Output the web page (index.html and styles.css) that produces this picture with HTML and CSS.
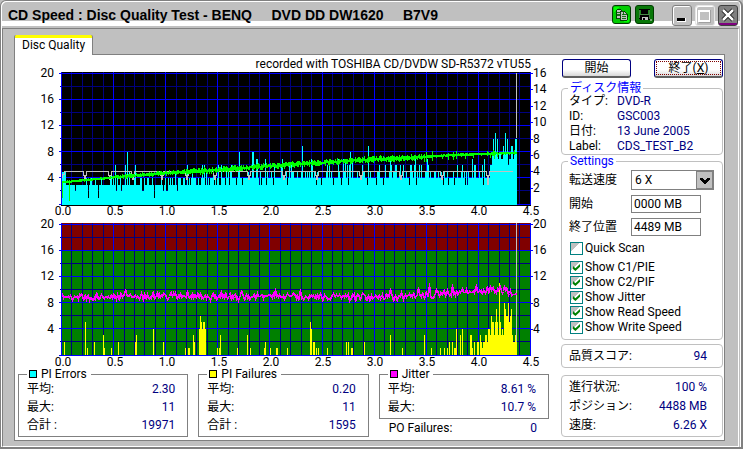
FILE: index.html
```html
<!DOCTYPE html>
<html lang="ja">
<head>
<meta charset="utf-8">
<meta name="viewport" content="width=device-width, initial-scale=1">
<title>CD Speed : Disc Quality Test</title>
<link rel="stylesheet" href="styles.css">
</head>
<body>
<div class="window">
  <header class="titlebar">
    <h1>CD Speed : Disc Quality Test - BENQ     DVD DD DW1620     B7V9</h1>
    <div class="tools">
      <button class="tool copy" aria-label="Copy">
        <svg viewBox="0 0 19 19" shape-rendering="crispEdges"><path d="M1 1h6L1 8zM18 12v6h-6z" fill="#0f0"/><path d="M4 4h5l2 2v8H4z" fill="#c0c0c0" stroke="#030"/><path d="M5 7h4M5 9h4M5 11h4" stroke="#060"/><path d="M8 6h5l3 3v7H8z" fill="#c0c0c0" stroke="#030"/><path d="M12 6v4h4M10 10h2M10 12h4M10 14h4" stroke="#060" fill="none"/></svg>
      </button>
      <button class="tool save" aria-label="Save">
        <svg viewBox="0 0 19 19" shape-rendering="crispEdges"><path d="M3 3h13v13H5l-2-2z" fill="#000"/><path d="M5 4h9v6H5z" fill="#1d8c1d"/><path d="M6 4h7v5H6z" fill="#000"/><path d="M4 5v8M15 5v9M5 10h9" stroke="#4c8c4c"/><path d="M7 12h6v4H7z" fill="#c0c0c0"/><path d="M8 13h2v3H8z" fill="#000"/><path d="M16 15h2v2h-2z" fill="#7a7"/></svg>
      </button>
    </div>
    <div class="controls">
      <button class="control" aria-label="Minimize"><svg viewBox="0 0 18 19" shape-rendering="crispEdges"><path d="M4 12h8v3H4z" fill="#000"/><path d="M4 15h8v1M12 12v4" stroke="#fff" fill="none"/></svg></button>
      <button class="control flat" aria-label="Maximize" disabled><svg viewBox="0 0 18 19" shape-rendering="crispEdges"><path d="M3 5h11v10H3z" fill="none" stroke="#fff" stroke-width="2"/><path d="M14.500 4v12H3" fill="none" stroke="#a0a0a0"/></svg></button>
      <button class="control close" aria-label="Close"><svg viewBox="0 0 18 19"><path d="M4 4l10 10M14 4L4 14" stroke="#000" stroke-width="4"/><path d="M4 4l10 10M14 4L4 14" stroke="#fff" stroke-width="2.500"/></svg></button>
    </div>
  </header>

  <main class="client">
    <button class="tab">Disc Quality</button>
    <div class="panel">
      <div class="results">
        <p class="recorder">recorded with TOSHIBA CD/DVDW SD-R5372 vTU55</p>
        <svg class="chart" id="errors" viewBox="15 72 546 145" role="img" aria-label="PI Errors"></svg>
        <svg class="chart" id="failures" viewBox="15 217 546 151" role="img" aria-label="PI Failures"></svg>
        <div class="stats">
          <fieldset class="stat">
            <legend><span class="swatch cyan"></span>PI Errors</legend>
            <dl><dt>平均:</dt><dd>2.30</dd><dt>最大:</dt><dd>11</dd><dt>合計 :</dt><dd>19971</dd></dl>
          </fieldset>
          <fieldset class="stat">
            <legend><span class="swatch yellow"></span>PI Failures</legend>
            <dl><dt>平均:</dt><dd>0.20</dd><dt>最大:</dt><dd>11</dd><dt>合計 :</dt><dd>1595</dd></dl>
          </fieldset>
          <div class="last">
            <fieldset class="stat">
              <legend><span class="swatch magenta"></span>Jitter</legend>
              <dl><dt>平均:</dt><dd>8.61 %</dd><dt>最大:</dt><dd>10.7 %</dd></dl>
            </fieldset>
            <dl class="po"><dt>PO Failures:</dt><dd>0</dd></dl>
          </div>
        </div>
      </div>

      <aside class="side">
        <div class="actions">
          <button class="push">開始</button>
          <button class="push default"><span>終了(<u>X</u>)</span></button>
        </div>
        <fieldset class="group info">
          <legend>ディスク情報</legend>
          <dl><dt>タイプ:</dt><dd>DVD-R</dd><dt>ID:</dt><dd>GSC003</dd><dt>日付:</dt><dd>13 June 2005</dd><dt>Label:</dt><dd>CDS_TEST_B2</dd></dl>
        </fieldset>
        <fieldset class="group settings">
          <legend>Settings</legend>
          <div class="fields">
            <label for="speed">転送速度</label>
            <span class="combo"><select id="speed"><option>6 X</option></select><span class="arrow"><svg viewBox="0 0 15 17" shape-rendering="crispEdges"><path d="M3 6h3v1h1v1h2V7h1V6h3v2h-1v1h-1v1h-1v1H9v1H7v-1H6v-1H5V9H4V8H3z"/></svg></span></span>
            <label for="start">開始</label>
            <input id="start" type="text" value="0000 MB">
            <label for="end">終了位置</label>
            <input id="end" type="text" value="4489 MB">
          </div>
          <label class="check quick"><input type="checkbox">Quick Scan</label>
          <label class="check"><input type="checkbox" checked>Show C1/PIE</label>
          <label class="check"><input type="checkbox" checked>Show C2/PIF</label>
          <label class="check"><input type="checkbox" checked>Show Jitter</label>
          <label class="check"><input type="checkbox" checked>Show Read Speed</label>
          <label class="check"><input type="checkbox" checked>Show Write Speed</label>
        </fieldset>
        <div class="group score"><dl><dt>品質スコア:</dt><dd>94</dd></dl></div>
        <div class="group progress"><dl><dt>進行状況:</dt><dd>100 %</dd><dt>ポジション:</dt><dd>4488 MB</dd><dt>速度:</dt><dd>6.26 X</dd></dl></div>
      </aside>
    </div>
  </main>
</div>
<script src="charts.js"></script>
</body>
</html>
```
FILE: styles.css
```css
* { box-sizing: border-box; }

body {
  margin: 0;
  background: #c0c0c0;
  color: #000;
  font: 12px/15px Roboto, "Noto Sans CJK JP", sans-serif;
}

button, input, select { font: inherit; color: inherit; margin: 0; }
button { padding: 0; }
dl, dd, p, h1 { margin: 0; }
fieldset { margin: 0; padding: 0; min-width: 0; border: 1px solid #808080; }
dd { color: #000080; text-align: right; }

.window {
  min-height: 100vh;
  display: flex;
  flex-direction: column;
  border: 1px solid #808080;
  border-right-width: 2px;
  border-bottom-width: 2px;
  border-radius: 6px 6px 0 0;
  box-shadow: inset 1px 1px #fff, inset -1px 0 #fff;
}

.titlebar {
  display: flex;
  align-items: flex-start;
  height: 27px;
  padding: 4px 3px 0 7px;
  background: linear-gradient(#fff, #fff) 1px 20px / 100% 5px no-repeat;
}
.titlebar h1 {
  flex: 1;
  font: bold 14px/21px "Liberation Sans", sans-serif;
  white-space: pre;
}
.tools, .controls { display: flex; }
.tools { gap: 4px; margin-right: 18px; }
.controls { gap: 3px; }
.tool { width: 19px; height: 19px; border: 1px solid #003c00; border-radius: 3px; background: #00a000; }
.copy { background: #0c0; }
.save { background: #087808; }
.tool svg, .control svg { display: block; width: 100%; height: 100%; }
.control {
  width: 20px;
  height: 21px;
  border: 1px solid #808080;
  border-radius: 3px;
  background: #c0c0c0;
  box-shadow: inset 1px 1px #fff;
}
.flat { border-color: #e8e8e8; }
.close { border-color: #404040; background: linear-gradient(#808080 17px, #800080 17px); box-shadow: none; }

.client {
  flex: 1;
  display: flex;
  flex-direction: column;
  align-items: flex-start;
  margin: 0 2px 0 1px;
  padding: 6px 13px 5px 11px;
  border: 1px solid #808080;
  border-right-color: #fff;
  border-bottom-color: #fff;
}
.tab {
  position: relative;
  z-index: 1;
  height: 20px;
  margin-bottom: -1px;
  padding: 0 7px;
  border: 1px solid #808080;
  border-width: 0 1px;
  border-radius: 2px 2px 0 0;
  background: linear-gradient(#ff0 3px, #fff 3px);
}
.panel {
  align-self: stretch;
  flex: 1;
  display: grid;
  grid-template-columns: 1fr 162px;
  padding-right: 1px;
  border: 1px solid #808080;
  background: #fff;
}

.recorder { height: 17px; padding-right: 30px; line-height: 18px; text-align: right; }
.chart { display: block; width: 100%; overflow: visible; }
.chart text { font: 12px Roboto, sans-serif; }

.stats {
  display: grid;
  grid-template-columns: repeat(3, 1fr);
  gap: 10px;
  padding: 0 12px 0 3px;
}
.stat legend { display: flex; align-items: center; gap: 4px; margin-left: 8px; padding-right: 4px; line-height: 12px; }
.swatch { width: 8px; height: 8px; border: 1px solid #000; }
.cyan { background: #0ff; }
.yellow { background: #ff0; }
.magenta { background: #f0f; }
.stat dl, .po { display: grid; grid-template-columns: 1fr auto; padding: 0 12px 0 8px; line-height: 18px; }
.stat dl { padding-bottom: 2px; }
.po { padding: 0 12px 0 10px; }

.side { padding-top: 4px; }
.actions { display: flex; justify-content: space-between; margin: 0 0 4px 1px; }
.push {
  width: 69px;
  height: 19px;
  padding: 1px;
  border: 1px solid #000080;
  border-bottom: 2px solid #606060;
  border-radius: 3px;
  background: linear-gradient(#fff 60%, #d8d8d8);
  line-height: 15px;
}
.push span { display: block; line-height: 12px; border: 1px dotted #800000; }

.group { border: 1px solid #c0c0c0; border-radius: 4px; padding: 0 7px; }
.group legend { margin-left: -1px; padding: 0 2px; color: #00f; line-height: 12px; }
.group dl { display: grid; grid-template-columns: 1fr auto; padding-right: 8px; }
.info dl { grid-template-columns: 48px 1fr; padding: 0; }
.info dd { text-align: left; }

.fields {
  display: grid;
  grid-template-columns: 62px 1fr;
  row-gap: 5px;
  align-items: center;
  justify-items: start;
  padding: 3px 0 5px;
}
.fields label { line-height: 18px; }
.combo { display: flex; width: 83px; height: 20px; border: 1px solid #808080; }
.combo select { flex: 1; min-width: 0; appearance: none; border: 0; padding: 0 3px; background: #fff; }
.arrow { width: 17px; border: 1px solid #808080; background: #c0c0c0; pointer-events: none; }
.arrow svg { display: block; }
.fields input { width: 70px; height: 18px; padding: 0 2px; border: 1px solid #808080; background: #fff; }

.check { display: flex; align-items: center; gap: 2px; height: 15px; margin-left: 1px; }
.quick { margin-bottom: 4px; }
.check input {
  appearance: none;
  width: 13px;
  height: 13px;
  border: 1px solid #008080;
  background: linear-gradient(135deg, #c0c0c0 40%, #fff 40%);
}
.check input:checked::before {
  content: "";
  display: block;
  width: 7px;
  height: 7px;
  margin: 2px;
  background: #008000;
  clip-path: polygon(0 30%, 35% 60%, 100% 0, 100% 40%, 35% 100%, 0 70%);
}
.settings { padding-bottom: 4px; }
.score { margin-top: 4px; line-height: 22px; }
.progress { margin-top: 7px; padding: 2px 7px 1px; line-height: 19px; }
```
FILE: charts.js
```js
const RIGHT = 530, END = 517;
let seed = 1620;
const rnd = () => (seed = (seed * 16807) % 2147483647) / 2147483647;
const interpolate = (points, x) => {
  let i = 1;
  while (i < points.length - 1 && points[i][0] < x) i++;
  const [a, b] = [points[i - 1], points[i]];
  return a[1] + (b[1] - a[1]) * (x - a[0]) / (b[0] - a[0]);
};
const path = (d, color, extra = '') => `<path d="${d}" stroke="${color}" fill="none" shape-rendering="crispEdges" ${extra}/>`;
const label = (x, y, value, anchor) => `<text x="${x}" y="${y}" text-anchor="${anchor}">${value}</text>`;

function grid(top, minorColor) {
  let minor = '', major = '';
  for (let i = 0; i <= 45; i++) {
    const x = Math.round(61 + i * 10.42) + 0.5;
    if (i % 5 === 0) major += `M${x} ${top}V${top + 133}`;
    else minor += `M${x} ${top}V${top + 133}`;
  }
  for (let i = 0; i <= 10; i++) {
    const y = Math.round(top + 0.5 + i * 13.1) + 0.5;
    if (i % 2 === 0) major += `M59 ${y}H${RIGHT}`;
    else minor += `M60 ${y}H${RIGHT}`;
  }
  return path(minor, minorColor) + path(major, '#0000ff');
}

function axes(top, rightMax, rightStep) {
  let out = '';
  for (let v = 4; v <= 20; v += 4) out += label(54, top + 136 - v * 6.55, v, 'end');
  for (let v = rightStep; v <= rightMax; v += rightStep) {
    const y = Math.round(top + 132 - v * 131 / rightMax);
    out += path(`M531 ${y + 0.5}h2`, '#00f') + label(533, y + 4, v, 'start');
  }
  for (let i = 0; i <= 9; i++) out += label(63 + i * 52, top + 143, (i / 2).toFixed(1), 'middle');
  return out;
}

function drawErrors() {
  const top = 72, base = 205;
  const peaks = {115:6,125:6,127:8,135:6,187:6,202:6,204:6,218:6,221:6,231:6,239:8,252:8,253:8,256:7,257:7,265:7,274:6,282:7,
    302:9,311:7,338:7,343:7,345:7,350:8,352:7,368:9,390:7,403:6,415:7,427:7,472:7,484:7,493:10,495:11,497:10,503:9,505:11,507:10,511:9,512:9,515:10,516:10};
  let bars = '';
  for (let x = 62; x < END; x++) {
    const r = rnd();
    let v;
    if (x < 115) v = r < .08 ? 2 : r < .78 ? 3 : r < .94 ? 4 : 5;
    else if (x < 190) v = r < .12 ? 2 : r < .62 ? 3 : r < .92 ? 4 : 5;
    else if (x < 250) v = r < .3 ? 3 : r < .85 ? 4 : 5;
    else if (x < 345) v = r < .12 ? 3 : r < .65 ? 4 : r < .9 ? 5 : 6;
    else if (x < 490) v = r < .15 ? 3 : r < .62 ? 4 : r < .9 ? 5 : 6;
    else v = r < .45 ? 7 : r < .8 ? 8 : 6;
    if (x < 66) v = 5;
    if (x === 88 || x === 98 || x === 154) v = 1;
    v = peaks[x] || v;
    bars += `M${x + .5} ${base}V${Math.round(base - 1 - v * 6.5)}`;
  }
  let write = 'M62.5 177.500V174.500H64.500V171.500';
  for (const x of [85, 110, 133, 162, 187, 215, 249, 284, 317, 361, 401, 442, 488]) {
    write += `H${x - 1.5}V175.500H${x - .5}V${x === 488 ? 184 : 179.500}H${x + .5}V175.500H${x + 1.5}V171.500`;
  }
  write += 'H513';
  const speed = [[62,182],[100,178.5],[115,177],[165,173],[215,170],[270,165.7],[320,162.6],[373,159],[410,157.7],[450,155],[478,154],[517,152.7]];
  let read = 'M62.5 198V182M69.5 201V181';
  for (let x = 62; x < END; x++) {
    const y = interpolate(speed, x);
    const spread = x < 115 ? .6 : x < 190 ? 1.8 : x < 420 ? 2.8 : rnd() < .2 ? 4.5 : .7;
    read += `M${x + .5} ${Math.round(y - .7 - rnd() * spread)}V${Math.round(y + 1 + rnd() * spread)}`;
  }
  document.getElementById('errors').innerHTML =
    `<rect x="61" y="${top}" width="470" height="134"/>` + grid(top, '#000080') +
    path(bars, '#00ffff') + path(`M516.500 73V138`, '#c0c0c0') + path(write, '#c0c0c0') + path(read, '#00ff00') + axes(top, 16, 2);
}

function drawFailures() {
  const top = 223, base = 355;
  const values = {64:2,85:5,87:1,94:2,103:3,104:1,111:1,118:2,135:2,136:3,153:4,163:2,185:1,188:1,189:1,193:3,194:2,
    199:4,200:6,201:5,202:4,203:5,204:5,205:4,217:1,219:1,220:3,237:1,247:3,250:1,264:1,265:2,270:1,276:1,277:1,287:1,
    310:5,311:4,313:2,314:2,316:1,318:1,327:1,346:2,348:2,351:1,352:1,364:2,390:3,402:1,424:3,431:1,440:1,444:1,447:1,449:2,452:2,
    454:1,455:1,456:4,460:3,462:4,470:3,471:3,472:1,474:2,477:2,478:2,480:3,481:2,482:1,483:2,484:2,485:3,486:3,487:2,488:4,489:4,
    490:3,491:6,492:5,493:5,494:3,495:5,496:7,497:5,498:3,499:11,500:5,501:3,502:4,503:3,504:8,505:7,506:6,507:6,508:8,509:5,
    510:6,511:7,512:3,513:2,514:2,515:3,516:2};
  const bars = Object.entries(values).map(([x, v]) => `M${+x + .5} ${base}V${Math.round(base - v * 6.55)}`).join('');
  const trend = [[62,296.5],[270,296],[350,297],[410,296],[440,294],[475,291.5],[490,290],[505,290],[517,294]];
  const spikes = {125:289,157:291,187:290,221:290,241:290,275:288,300:289,390:288,418:287,429:283,436:289,452:284,462:288,476:285,490:285,504:285};
  let jitter = '';
  for (let x = 62; x < END; x++) {
    const y = spikes[x] || Math.round(interpolate(trend, x) + (rnd() + rnd() - 1) * 5);
    jitter += `${jitter ? 'L' : 'M'}${x + .5} ${y + .5}`;
  }
  document.getElementById('failures').innerHTML =
    `<rect x="61" y="${top}" width="470" height="27" fill="#800000"/><rect x="61" y="250" width="470" height="105" fill="#008000"/>` +
    grid(top, '#000080') + path(`M516.500 ${top}V${base}`, '#c0c0c0') + path(bars, '#ffff00') +
    path(jitter, '#ff00ff', 'stroke-width="1.5"') + axes(top, 20, 4);
}

drawErrors();
drawFailures();
```
